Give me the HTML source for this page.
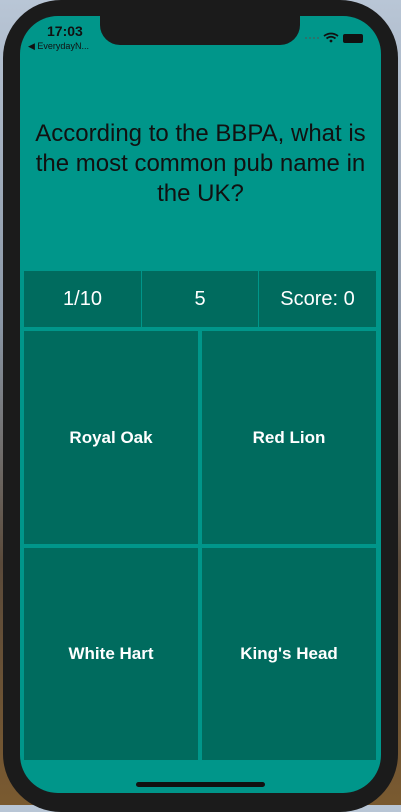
<!DOCTYPE html>
<html><head><meta charset="utf-8"><style>
*{margin:0;padding:0;box-sizing:border-box}
body{width:401px;height:805px;overflow:hidden;background:linear-gradient(#b9c6d6 0%,#8a97a6 40%,#5a4a3a 70%,#7a5a30 100%);font-family:"Liberation Sans",sans-serif;position:relative}
.phone{position:absolute;left:3px;top:0;width:395px;height:812px;background:#1b1b1b;border-radius:58px}
.screen{position:absolute;left:20px;top:16px;width:361px;height:777px;background:#00968a;border-radius:38px;overflow:hidden}
.notch{position:absolute;left:80px;top:0;width:200px;height:29px;background:#1b1b1b;border-radius:0 0 20px 20px}
.time{position:absolute;left:27px;top:7px;font-size:14px;font-weight:bold;color:#111}
.back{position:absolute;left:8px;top:25px;font-size:9px;color:#111}
.q{position:absolute;left:0;top:103px;width:361px;text-align:center;font-size:24px;line-height:30px;color:#111}
.cell{position:absolute;background:#006b5e;color:#fff;display:flex;align-items:center;justify-content:center}
.s{top:255px;height:56px;font-size:20px}
.b{font-weight:bold;font-size:17px}
.home{position:absolute;left:116px;top:766px;width:129px;height:5px;background:#111;border-radius:3px}
</style></head><body>
<div class="phone"></div>
<div class="screen">
<div class="notch"></div>
<div class="time">17:03</div>
<div class="back">◀ EverydayN...</div>
<svg style="position:absolute;left:284px;top:16px" width="62" height="12"><g fill="#3a6a64"><circle cx="2" cy="6" r="1"/><circle cx="6" cy="6" r="1"/><circle cx="10" cy="6" r="1"/><circle cx="14" cy="6" r="1"/></g><path d="M20 4 Q27 -1 34 4 M22.5 6.5 Q27 3 31.5 6.5" stroke="#111" stroke-width="1.8" fill="none"/><circle cx="27" cy="9" r="1.4" fill="#111"/><rect x="39" y="2" width="20" height="9" rx="2" fill="#111"/></svg>
<div class="q">According to the BBPA, what is<br>the most common pub name in<br>the UK?</div>
<div class="cell s" style="left:4px;width:117px">1/10</div>
<div class="cell s" style="left:122px;width:116px">5</div>
<div class="cell s" style="left:239px;width:117px">Score: 0</div>
<div class="cell b" style="left:4px;top:315px;width:174px;height:213px">Royal Oak</div>
<div class="cell b" style="left:182px;top:315px;width:174px;height:213px">Red Lion</div>
<div class="cell b" style="left:4px;top:532px;width:174px;height:212px">White Hart</div>
<div class="cell b" style="left:182px;top:532px;width:174px;height:212px">King's Head</div>
<div class="home"></div>
</div>
</body></html>
